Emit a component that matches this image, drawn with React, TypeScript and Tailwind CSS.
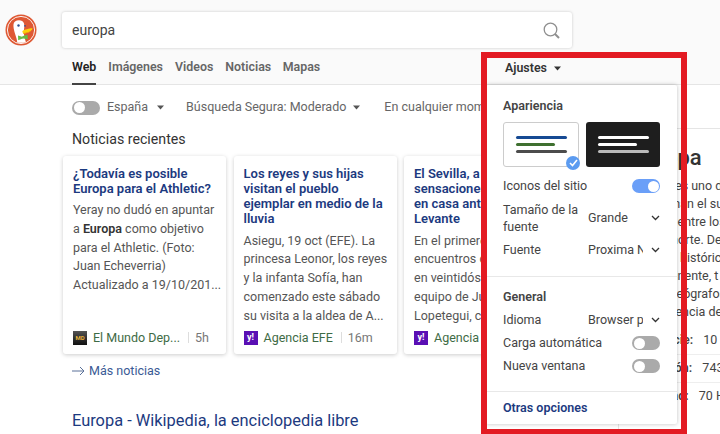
import React from "react";

function Caret({ className = "" }: { className?: string }) {
  return (
    <svg width="7" height="5" viewBox="0 0 7 5" className={className}>
      <path d="M0 0.5h7L3.5 4.5z" fill="currentColor" />
    </svg>
  );
}

function Chevron() {
  return (
    <svg width="9" height="6" viewBox="0 0 9 6" className="text-[#333]">
      <path d="M1 1l3.5 3.5L8 1" fill="none" stroke="currentColor" strokeWidth="1.3" />
    </svg>
  );
}

function Toggle({ on = false }: { on?: boolean }) {
  return (
    <div className={`flex h-[14px] w-[28px] items-center rounded-full px-[1.500px] ${on ? "justify-end bg-[#6a9ff8]" : "justify-start bg-[#aaaaaa]"}`}>
      <div className="h-[11px] w-[11px] rounded-full bg-white" />
    </div>
  );
}

function Logo() {
  return (
    <svg width="32" height="32" viewBox="0 0 32 32">
      <circle cx="16" cy="16" r="15.5" fill="#de5833" />
      <circle cx="16" cy="16" r="13.6" fill="none" stroke="#fff" strokeWidth="0.9" />
      <path d="M10 7.5c3-2 8-1.500 9 2 .8 2.600 0 5-.2 7.500-.2 3 1 7 2 11-3 1-6 1-8.500.5-.5-5-3-10-3.600-14-.4-3-.6-5.500 1.300-7z" fill="#fff" />
      <circle cx="13.500" cy="11.500" r="1.200" fill="#2d4f8e" />
      <circle cx="20" cy="11.800" r="0.900" fill="#2d4f8e" />
      <path d="M17.500 17c1.500-1.500 8-3 9.800-2.800.8.800-.6 2-1.300 2.400 0 1.200-5 2.800-7.500 2.400-1-.4-1.300-1.200-1-2z" fill="#fdd20a" />
      <path d="M18 19c2.500.2 6-1 8-2.400-.2 1.400-5 3.400-7.500 3.300z" fill="#f2a20c" />
      <path d="M13 21.500l4 1.200 1-.6 4.500-1.300.3 4.500-4.300-.9-1.500.4-3.800 1.500z" fill="#67bd47" />
    </svg>
  );
}

function Card({
  title,
  lines,
  source,
  time,
  icon,
}: {
  title: string[];
  lines: React.ReactNode[];
  source: string;
  time: string;
  icon: "mundo" | "yahoo";
}) {
  return (
    <div className="flex h-[198px] w-[163px] shrink-0 flex-col overflow-hidden rounded-[3px] bg-white pl-[10px] pt-[9.500px] shadow-[0_1px_4px_rgba(0,0,0,0.2)]">
      <div className="text-[13px] font-semibold leading-[15.3px] text-[#1c3a80]">
        {title.map((t) => (
          <div key={t} className="whitespace-nowrap">{t}</div>
        ))}
      </div>
      <div className="mt-[5px] text-[12.500px] leading-[18.700px] text-[#555]">
        {lines.map((l, i) => (
          <div key={i} className="whitespace-nowrap">{l}</div>
        ))}
      </div>
      <div className="mt-auto mb-[9px] flex items-center text-[12.500px] leading-[15px]">
        {icon === "mundo" ? (
          <div className="flex h-[14px] w-[14px] items-center justify-center bg-gradient-to-b from-[#555] to-[#111] text-[6px] font-bold leading-none text-[#e8b23a]">MD</div>
        ) : (
          <div className="flex h-[14px] w-[14px] items-center justify-center bg-[#5a0fb4] text-[9px] font-bold leading-none text-white">y!</div>
        )}
        <span className="ml-[6px] whitespace-nowrap text-[#3e6b45]">{source}</span>
        {time && <span className="ml-[8px] h-[11px] w-px bg-[#ddd]" />}
        {time && <span className="ml-[6px] text-[#777]">{time}</span>}
      </div>
    </div>
  );
}

const body = "text-[12.500px] leading-[18px] text-[#444]";

export default function App() {
  return (
    <div className="relative h-[434px] w-[720px] overflow-hidden bg-white font-['Roboto','Liberation_Sans',sans-serif]">
      <header className="h-[85px] border-b border-[#e5e5e5] bg-[#fafafa]">
        <div className="flex items-center pl-[5px] pt-[12px]">
          <Logo />
          <div className="ml-[25px] flex h-[36px] w-[510px] items-center justify-between rounded-[3px] bg-white pl-[10px] pr-[12px] shadow-[0_0_3px_rgba(0,0,0,0.2)]">
            <span className="text-[14px] text-[#444]">europa</span>
            <svg width="17" height="17" viewBox="0 0 17 17" fill="none" stroke="#8f8f8f">
              <circle cx="7.500" cy="7.500" r="6.300" strokeWidth="1.300" />
              <path d="M12 12l4 4" strokeWidth="2" />
            </svg>
          </div>
        </div>
        <nav className="ml-[72px] mt-[6px] flex text-[12.400px] font-semibold leading-[26px] text-[#666]">
          <span className="h-[31px] border-b-2 border-[#444] text-[#222]">Web</span>
          <span className="ml-[12px]">Imágenes</span>
          <span className="ml-[12px]">Videos</span>
          <span className="ml-[12px]">Noticias</span>
          <span className="ml-[11.500px]">Mapas</span>
        </nav>
      </header>

      <div className="flex">
        <main className="w-[618px] shrink-0 overflow-hidden pl-[72px]">
          <div className="flex h-[45px] items-center text-[12.500px] text-[#666]">
            <Toggle />
            <span className="ml-[7px]">España</span>
            <Caret className="ml-[9px] text-[#555]" />
            <span className="ml-[22px] whitespace-nowrap">Búsqueda Segura: Moderado</span>
            <Caret className="ml-[7px] text-[#555]" />
            <span className="ml-[24px] whitespace-nowrap">En cualquier momento</span>
          </div>
          <h2 className="-mt-[1px] text-[14.200px] leading-[20px] text-[#333]">Noticias recientes</h2>
          <div className="mt-[7px] -ml-[9px] flex gap-[7.500px]">
            <Card
              title={["¿Todavía es posible", "Europa para el Athletic?"]}
              lines={[
                "Yeray no dudó en apuntar",
                <>a <b className="font-semibold text-[#333]">Europa</b> como objetivo</>,
                "para el Athletic. (Foto:",
                "Juan Echeverria)",
                "Actualizado a 19/10/201...",
              ]}
              source="El Mundo Dep..."
              time="5h"
              icon="mundo"
            />
            <Card
              title={["Los reyes y sus hijas", "visitan el pueblo", "ejemplar en medio de la", "lluvia"]}
              lines={[
                "Asiegu, 19 oct (EFE). La",
                "princesa Leonor, los reyes",
                "y la infanta Sofía, han",
                "comenzado este sábado",
                "su visita a la aldea de A...",
              ]}
              source="Agencia EFE"
              time="16m"
              icon="yahoo"
            />
            <Card
              title={["El Sevilla, a por", "sensaciones", "en casa ante el", "Levante"]}
              lines={["En el primero de", "encuentros de", "en veintidós días", "equipo de Julen", "Lopetegui, con"]}
              source="Agencia EFE"
              time=""
              icon="yahoo"
            />
          </div>
          <div className="mt-[8px] flex items-center text-[12.500px] leading-[18px] text-[#3a5a94]">
            <svg width="13" height="10" viewBox="0 0 13 10" fill="none" stroke="#5a7199" strokeWidth="1">
              <path d="M0 5h12M8 1l4 4-4 4" />
            </svg>
            <span className="ml-[4px]">Más noticias</span>
          </div>
          <h3 className="mt-[30px] whitespace-nowrap text-[16.400px] leading-[22px] text-[#1c3a80]">Europa - Wikipedia, la enciclopedia libre</h3>
        </main>
        <aside className="h-[349px] flex-1 overflow-hidden pt-[43px]">
          <div className="h-[306px] border-l border-t border-[#e5e5e5] pl-[14px] pt-[16px]">
            <div className="whitespace-nowrap text-[22px] font-medium leading-[26px] text-[#333]">Europa</div>
            <div className={`mt-[6px] whitespace-nowrap ${body}`}>
              <div>Europa es uno de los</div>
              <div>conforman el sup</div>
              <div>situado entre los</div>
              <div>latitud norte. De</div>
              <div>razones históric</div>
              <div>un continente, t</div>
              <div>de los geógrafos</div>
              <div>de referencia de</div>
            </div>
            <div className={`mt-[10px] whitespace-nowrap ${body}`}>
              <div className="border-b border-[#eee] pb-[4.500px]"><b className="font-semibold">Superficie:</b><span className="ml-[7px]"> 10 1</span></div>
              <div className="border-b border-[#eee] py-[4.500px]"><b className="font-semibold">Población:</b><span className="ml-[7px]"> 743</span></div>
              <div className="py-[4.500px]"><b className="font-semibold">Densidad:</b><span className="ml-[7px]"> 70 H</span></div>
            </div>
          </div>
        </aside>
      </div>

      {/* Ajustes dropdown */}
      <div className="absolute left-[486px] top-[55px] h-[373px] w-[197px]">
        <div className="flex h-[26px] items-center pl-[19px] text-[12.400px] font-semibold text-[#333]">
          Ajustes
          <Caret className="ml-[7px] text-[#333]" />
        </div>
        <div className="mt-[4px] h-[339px] w-[191px] rounded-[2px] bg-white shadow-[0_0_4px_rgba(0,0,0,0.25)]">
          <div className="px-[17px] pt-[12px]">
            <div className={`${body} font-semibold text-[#333]`}>Apariencia</div>
            <div className="mt-[7px] flex gap-[7px]">
              <div className="relative flex h-[45px] w-[77px] flex-col justify-center gap-[4px] rounded-[3px] border border-[#ccc] bg-white pl-[12px]">
                <div className="h-[3px] w-[51px] rounded-full bg-[#164a93]" />
                <div className="h-[3px] w-[39px] rounded-full bg-[#3f7030]" />
                <div className="h-[3px] w-[51px] rounded-full bg-[#4c4c4c]" />
                <div className="absolute -bottom-[4px] -right-[2px] flex h-[14px] w-[14px] items-center justify-center rounded-full bg-[#5b9bf0]">
                  <svg width="9" height="8" viewBox="0 0 9 8" fill="none" stroke="#fff" strokeWidth="1.600"><path d="M1 4l2.500 2.500L8 1" /></svg>
                </div>
              </div>
              <div className="flex h-[45px] w-[75px] flex-col justify-center gap-[4px] rounded-[3px] bg-[#1e1e1e] pl-[12px]">
                <div className="h-[3px] w-[51px] rounded-full bg-white" />
                <div className="h-[3px] w-[39px] rounded-full bg-white" />
                <div className="h-[3px] w-[51px] rounded-full bg-[#bbb]" />
              </div>
            </div>
            <div className={`mt-[10px] flex items-center justify-between ${body}`}>
              <span>Iconos del sitio</span>
              <Toggle on />
            </div>
            <div className={`mt-[6px] flex items-center ${body}`}>
              <div className="w-[85px] leading-[17px]">Tamaño de la fuente</div>
              <span>Grande</span>
              <span className="ml-auto"><Chevron /></span>
            </div>
            <div className={`mt-[6px] flex items-center ${body}`}>
              <div className="w-[85px]">Fuente</div>
              <span className="w-[55px] overflow-hidden whitespace-nowrap">Proxima Nova</span>
              <span className="ml-auto"><Chevron /></span>
            </div>
          </div>
          <div className="mt-[17px] border-t border-[#e8e8e8] px-[17px] pt-[11px]">
            <div className={`${body} font-semibold text-[#333]`}>General</div>
            <div className={`mt-[5px] flex items-center ${body}`}>
              <div className="w-[85px]">Idioma</div>
              <span className="w-[55px] overflow-hidden whitespace-nowrap">Browser pref</span>
              <span className="ml-auto"><Chevron /></span>
            </div>
            <div className={`mt-[5px] flex items-center justify-between ${body}`}>
              <span>Carga automática</span>
              <Toggle />
            </div>
            <div className={`mt-[5px] flex items-center justify-between ${body}`}>
              <span>Nueva ventana</span>
              <Toggle />
            </div>
          </div>
          <div className="mt-[16px] border-t border-[#e8e8e8] px-[17px] pt-[7px] text-[12.500px] font-semibold leading-[18px] text-[#1c3a80]">
            Otras opciones
          </div>
        </div>
      </div>

      {/* Red highlight frame */}
      <div className="pointer-events-none absolute left-[481px] top-[52px] h-[383px] w-[206px] border-[6px] border-[#e31b23]" />
    </div>
  );
}
